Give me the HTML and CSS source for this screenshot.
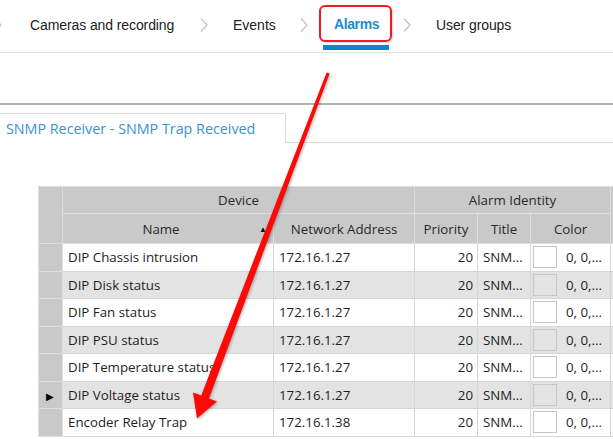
FILE: index.html
```html
<!DOCTYPE html>
<html>
<head>
<meta charset="utf-8">
<link rel="stylesheet" href="styles.css">
</head>
<body>
<div class="page">
  <nav class="nav">
    <svg class="chev chev-first" width="8" height="14" viewBox="0 0 8 14"><polyline points="1,0.5 7,7 1,13.5"/></svg>
    <span class="nav-item w1">Cameras and recording</span>
    <svg class="chev" width="8" height="14" viewBox="0 0 8 14"><polyline points="1,0.5 7,7 1,13.5"/></svg>
    <span class="nav-item w2">Events</span>
    <svg class="chev" width="8" height="14" viewBox="0 0 8 14"><polyline points="1,0.5 7,7 1,13.5"/></svg>
    <div class="nav-active">
      <div class="active-box"><span class="active-text">Alarms</span></div>
      <div class="active-bar"></div>
    </div>
    <svg class="chev chev-after" width="8" height="14" viewBox="0 0 8 14"><polyline points="1,0.5 7,7 1,13.5"/></svg>
    <span class="nav-item w4">User groups</span>
  </nav>

  <div class="divider"></div>

  <div class="tabstrip">
    <div class="tab">SNMP Receiver - SNMP Trap Received</div>
    <div class="tab-fill"></div>
  </div>

  <div class="grid-wrap">
    <table class="grid">
      <colgroup>
        <col class="c-rh"><col class="c-name"><col class="c-addr"><col class="c-prio"><col class="c-title"><col class="c-color"><col class="c-extra">
      </colgroup>
      <thead>
        <tr class="hr1">
          <th class="rh" rowspan="2"></th>
          <th colspan="2">Device</th>
          <th colspan="3">Alarm Identity</th>
          <th class="extra" rowspan="2"></th>
        </tr>
        <tr class="hr2">
          <th class="sorted">Name<span class="sort">&#9650;</span></th>
          <th>Network Address</th>
          <th>Priority</th>
          <th>Title</th>
          <th>Color</th>
        </tr>
      </thead>
      <tbody>
        <tr class="odd"><td class="rh"></td><td>DIP Chassis intrusion</td><td>172.16.1.27</td><td class="num">20</td><td>SNM...</td><td><div class="colorcell"><span class="swatch"></span><span>0, 0,...</span></div></td><td></td></tr>
        <tr class="even"><td class="rh"></td><td>DIP Disk status</td><td>172.16.1.27</td><td class="num">20</td><td>SNM...</td><td><div class="colorcell"><span class="swatch"></span><span>0, 0,...</span></div></td><td></td></tr>
        <tr class="odd"><td class="rh"></td><td>DIP Fan status</td><td>172.16.1.27</td><td class="num">20</td><td>SNM...</td><td><div class="colorcell"><span class="swatch"></span><span>0, 0,...</span></div></td><td></td></tr>
        <tr class="even"><td class="rh"></td><td>DIP PSU status</td><td>172.16.1.27</td><td class="num">20</td><td>SNM...</td><td><div class="colorcell"><span class="swatch"></span><span>0, 0,...</span></div></td><td></td></tr>
        <tr class="odd"><td class="rh"></td><td>DIP Temperature status</td><td>172.16.1.27</td><td class="num">20</td><td>SNM...</td><td><div class="colorcell"><span class="swatch"></span><span>0, 0,...</span></div></td><td></td></tr>
        <tr class="even"><td class="rh"><span class="current">&#9654;</span></td><td>DIP Voltage status</td><td>172.16.1.27</td><td class="num">20</td><td>SNM...</td><td><div class="colorcell"><span class="swatch"></span><span>0, 0,...</span></div></td><td></td></tr>
        <tr class="odd"><td class="rh"></td><td>Encoder Relay Trap</td><td>172.16.1.38</td><td class="num">20</td><td>SNM...</td><td><div class="colorcell"><span class="swatch"></span><span>0, 0,...</span></div></td><td></td></tr>
      </tbody>
    </table>
  </div>

  <svg class="arrow" width="613" height="439" viewBox="0 0 613 439">
    <polygon points="326.6,72.5 329.6,73.6 209,398.4 217,401.5 197,418.5 193,392.6 201.2,395.6"/>
  </svg>
</div>
</body>
</html>
```

FILE: styles.css
```css
html, body {
  margin: 0;
  padding: 0;
  background: #ffffff;
}

.page {
  position: relative;
  width: 613px;
  height: 439px;
  overflow: hidden;
  font-family: "Liberation Sans", Arial, sans-serif;
  color: #1e1e1e;
}

/* ---------- top navigation ---------- */
.nav {
  display: flex;
  align-items: center;
  height: 52px;
  border-bottom: 1px solid #e2e2e2;
  font-size: 14px;
}

.chev {
  flex: none;
  fill: none;
  stroke: #c3c3c3;
  stroke-width: 1.3;
  margin-top: -2px;
}

.chev-first { margin-left: -6px; }

.nav-item {
  flex: none;
  white-space: nowrap;
  color: #222;
  margin-top: -2px;
}

.w1 { margin-left: 28px; width: 170px; letter-spacing: -0.1px; }
.w2 { margin-left: 25px; width: 67px; }
.w4 { margin-left: 25px; letter-spacing: -0.1px; }

.nav-active {
  flex: none;
  align-self: stretch;
  display: flex;
  flex-direction: column;
  align-items: flex-start;
  margin-left: 11px;
  width: 73px;
}

.active-box {
  box-sizing: border-box;
  margin-top: 5px;
  width: 73px;
  height: 37px;
  border: 2px solid #ec1c24;
  border-radius: 6px;
  display: flex;
  align-items: center;
  padding-left: 13px;
  box-shadow: 1px 1px 2px rgba(0, 0, 0, 0.18);
}

.active-text {
  color: #1f8ad2;
  font-weight: bold;
  font-size: 14px;
  letter-spacing: -0.4px;
}

.active-bar {
  margin-top: 3px;
  margin-left: 4px;
  width: 66px;
  height: 5px;
  background: #0e86cf;
}

.chev-after { margin-left: 11px; }

/* ---------- divider ---------- */
.divider {
  margin-top: 50px;
  height: 2px;
  background: #b3b4ab;
}

/* ---------- tab strip ---------- */
.tabstrip {
  display: flex;
  margin-top: 8px;
  height: 30px;
}

.tab {
  box-sizing: border-box;
  flex: none;
  width: 286px;
  height: 30px;
  border-top: 1px solid #d9d9d9;
  border-right: 1px solid #d9d9d9;
  padding-left: 6px;
  display: flex;
  align-items: center;
  font-family: "Open Sans", "Noto Sans", sans-serif;
  font-size: 14.3px;
  color: #3a92d4;
  white-space: nowrap;
}

.tab-fill {
  flex: 1;
  box-sizing: border-box;
  height: 30px;
  border-bottom: 1px solid #d9d9d9;
}

/* ---------- data grid ---------- */
.grid-wrap {
  margin-top: 43px;
  margin-left: 38px;
  width: 575px;
  overflow: hidden;
}

.grid {
  border-collapse: collapse;
  table-layout: fixed;
  width: 615px;
  font-family: "Open Sans", "Noto Sans", sans-serif;
  font-size: 13.3px;
  color: #1e1e1e;
}

.c-rh { width: 24px; }
.c-name { width: 211px; }
.c-addr { width: 141px; }
.c-prio { width: 63px; }
.c-title { width: 53px; }
.c-color { width: 80px; }
.c-extra { width: 43px; }

.grid th {
  background: #c9c9c9;
  border: 1px solid #dedede;
  font-weight: normal;
  color: #2a2a2a;
  text-align: center;
  padding: 0;
  white-space: nowrap;
}

.hr1 th { height: 26px; }
.hr2 th { height: 29px; }

.grid th.sorted {
  position: relative;
  padding-right: 14px;
}

.sort {
  position: absolute;
  right: 6px;
  top: 9px;
  font-size: 8px;
  color: #111;
}

.grid td {
  height: 26.5px;
  padding: 0 0 0 5px;
  border: 1px solid #d6d6d6;
  white-space: nowrap;
  overflow: hidden;
}

.grid tr.odd td { background: #ffffff; }
.grid tr.even td { background: #e3e3e3; }

.grid td.rh,
.grid tr.odd td.rh,
.grid tr.even td.rh {
  background: #c9c9c9;
  border-color: #dedede;
  padding: 0;
  text-align: center;
}

.current {
  font-size: 10px;
  color: #000;
  position: relative;
  left: -1px;
}

.grid td.num {
  text-align: right;
  padding: 0 4px 0 0;
}

.colorcell {
  display: flex;
  align-items: center;
  margin-left: -3px;
}

.swatch {
  box-sizing: border-box;
  width: 24px;
  height: 22px;
  border: 1px solid #c6c6c6;
  margin-right: 9px;
}

/* ---------- annotation arrow ---------- */
.arrow {
  position: absolute;
  left: 0;
  top: 0;
  pointer-events: none;
  filter: drop-shadow(1px 1px 1.5px rgba(0, 0, 0, 0.3));
}

.arrow polygon { fill: #ff0808; }
```
